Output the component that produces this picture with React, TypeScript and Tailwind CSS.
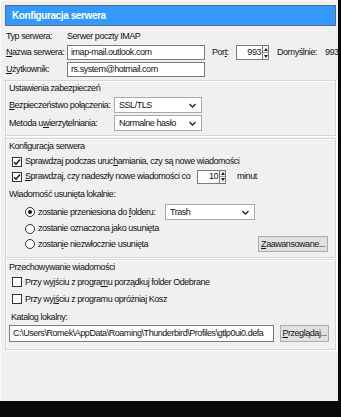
import type { ReactNode } from 'react';

function Check({ on }: { on?: boolean }) {
  return (
    <span className="w-[10px] h-[10px] shrink-0 border border-[#333] bg-white flex items-center justify-center">
      {on && (
        <svg width="8" height="8" viewBox="0 0 8 8">
          <path d="M1 4.2 L3 6.2 L7 1.5" fill="none" stroke="#111" strokeWidth="1.4" />
        </svg>
      )}
    </span>
  );
}

function Radio({ on }: { on?: boolean }) {
  return (
    <span className="w-[10px] h-[10px] shrink-0 rounded-full border border-[#333] bg-white flex items-center justify-center">
      {on && <span className="w-[4px] h-[4px] rounded-full bg-[#111]" />}
    </span>
  );
}

function Spin() {
  return (
    <span className="w-[6px] h-full border border-l-0 border-[#7a7a7a] bg-[#f4f4f4] flex flex-col">
      <span className="flex-1 flex items-center justify-center border-b border-[#9a9a9a]">
        <svg width="4" height="3" viewBox="0 0 4 3">
          <path d="M0 3 L2 0 L4 3 Z" fill="#222" />
        </svg>
      </span>
      <span className="flex-1 flex items-center justify-center">
        <svg width="4" height="3" viewBox="0 0 4 3">
          <path d="M0 0 L2 3 L4 0 Z" fill="#222" />
        </svg>
      </span>
    </span>
  );
}

function Select({ value, className }: { value: string; className: string }) {
  return (
    <div className={`h-[16px] shrink-0 border border-[#a9a9a9] bg-white flex items-center pl-[4px] pr-[5px] ${className}`}>
      <span className="flex-1">{value}</span>
      <svg width="7" height="5" viewBox="0 0 7 5">
        <path d="M0.5 1 L3.5 4 L6.5 1" fill="none" stroke="#222" strokeWidth="1.3" />
      </svg>
    </div>
  );
}

function Group({ title, children, className }: { title: string; children: ReactNode; className: string }) {
  return (
    <div className={`w-[331px] border border-[#d6d6d6] shadow-[inset_1px_1px_0_#fff,1px_1px_0_#fff] pl-[3px] flex flex-col ${className}`}>
      <div className="h-[15px] flex items-center">{title}</div>
      {children}
    </div>
  );
}

export default function App() {
  return (
    <div className="w-[341px] h-[417px] bg-[#0a0a0a] font-['Liberation_Sans',Arial,sans-serif] text-[9px] tracking-[-0.45px] leading-none text-[#111] whitespace-nowrap">
      <div className="w-[338px] h-[401px] bg-[#f0f0f0] border-l border-t border-[#fafafa] pt-[4px] pl-[4px] flex flex-col">
        <div className="w-[331px] h-[21px] bg-[#3399ff] border border-[#5e6c79] flex items-center pl-[6px] text-white font-bold text-[10px] tracking-[-0.4px]">
          Konfiguracja serwera
        </div>

        <div className="pl-[1px] flex flex-col">
          <div className="h-[14px] mt-[3px] flex items-center">
            <span className="w-[61px] shrink-0">Typ serwera:</span>
            <span>Serwer poczty IMAP</span>
          </div>
          <div className="h-[15px] mt-[2px] flex items-center">
            <span className="w-[61px] shrink-0">
              <span className="underline">N</span>azwa serwera:
            </span>
            <div className="w-[138px] shrink-0 h-full border border-[#7a7a7a] bg-white flex items-center pl-[3px]">imap-mail.outlook.com</div>
            <span className="w-[24px] shrink-0 ml-[7px]">
              Por<span className="underline">t</span>:
            </span>
            <div className="h-full flex shrink-0">
              <div className="w-[27px] h-full border border-[#7a7a7a] bg-white flex items-center justify-end pr-[1px]">993</div>
              <Spin />
            </div>
            <span className="w-[48px] shrink-0 ml-[8px]">Domyślnie:</span>
            <span>993</span>
          </div>
          <div className="h-[15px] mt-[2px] flex items-center">
            <span className="w-[61px] shrink-0">
              <span className="underline">U</span>żytkownik:
            </span>
            <div className="w-[138px] h-full border border-[#7a7a7a] bg-white flex items-center pl-[3px]">rs.system@hotmail.com</div>
          </div>
        </div>

        <Group title="Ustawienia zabezpieczeń" className="mt-[3px] pb-[4px]">
          <div className="h-[16px] mt-[1px] flex items-center">
            <span className="w-[105px] shrink-0">
              <span className="underline">B</span>ezpieczeństwo połączenia:
            </span>
            <Select value="SSL/TLS" className="w-[88px]" />
          </div>
          <div className="h-[16px] mt-[2px] flex items-center">
            <span className="w-[105px] shrink-0">
              Metoda u<span className="underline">w</span>ierzytelniania:
            </span>
            <Select value="Normalne hasło" className="w-[88px]" />
          </div>
        </Group>

        <Group title="Konfiguracja serwera" className="mt-[2px] pb-[5px]">
          <div className="h-[15px] flex items-center pl-[3px]">
            <Check on />
            <span className="ml-[3px]">
              Sprawdzaj podczas uruc<span className="underline">h</span>amiania, czy są nowe wiadomości
            </span>
          </div>
          <div className="h-[15px] flex items-center pl-[3px]">
            <Check on />
            <span className="ml-[3px] w-[172px] shrink-0">
              <span className="underline">S</span>prawdzaj, czy nadeszły nowe wiadomości co
            </span>
            <div className="h-[14px] flex shrink-0">
              <div className="w-[23px] h-full border border-[#7a7a7a] bg-white flex items-center justify-end pr-[1px]">10</div>
              <Spin />
            </div>
            <span className="ml-[11px]">minut</span>
          </div>
          <div className="h-[16px] mt-[2px] flex items-center">Wiadomość usunięta lokalnie:</div>
          <div className="h-[16px] mt-[2px] flex items-center pl-[16px]">
            <Radio on />
            <span className="ml-[3px] w-[127px] shrink-0">
              zostanie przeniesiona do <span className="underline">f</span>olderu:
            </span>
            <Select value="Trash" className="w-[90px]" />
          </div>
          <div className="h-[15px] mt-[1px] flex items-center pl-[16px]">
            <Radio />
            <span className="ml-[3px]">zostanie oznaczona jako usunięta</span>
          </div>
          <div className="h-[16px] flex items-center pl-[16px]">
            <Radio />
            <span className="ml-[3px]">
              zostan<span className="underline">i</span>e niezwłocznie usunięta
            </span>
            <button className="ml-auto mr-[7px] w-[70px] shrink-0 h-full border border-[#adadad] bg-[#e1e1e1] flex items-center justify-center">
              <span>
                <span className="underline">Z</span>aawansowane...
              </span>
            </button>
          </div>
        </Group>

        <Group title="Przechowywanie wiadomości" className="mt-[1px] pb-[7px]">
          <div className="h-[14px] flex items-center pl-[3px]">
            <Check />
            <span className="ml-[3px]">
              Przy wyjściu z progra<span className="underline">m</span>u porządkuj folder Odebrane
            </span>
          </div>
          <div className="h-[14px] mt-[3px] flex items-center pl-[3px]">
            <Check />
            <span className="ml-[3px]">
              Przy wyj<span className="underline">ś</span>ciu z programu opróżniaj Kosz
            </span>
          </div>
          <div className="h-[14px] mt-[4px] flex items-center pl-[2px]">Katalog lokalny:</div>
          <div className="h-[17px] mt-[1px] flex items-center">
            <div className="w-[265px] shrink-0 h-full border border-[#7a7a7a] bg-white flex items-center pl-[3px] overflow-hidden">
              <span className="truncate-none">C:\Users\Romek\AppData\Roaming\Thunderbird\Profiles\gtlp0ui0.defa</span>
            </div>
            <button className="ml-[6px] w-[49px] shrink-0 h-full border border-[#adadad] bg-[#e1e1e1] flex items-center justify-center">
              <span>
                <span className="underline">P</span>rzeglądaj...
              </span>
            </button>
          </div>
        </Group>
      </div>
    </div>
  );
}
